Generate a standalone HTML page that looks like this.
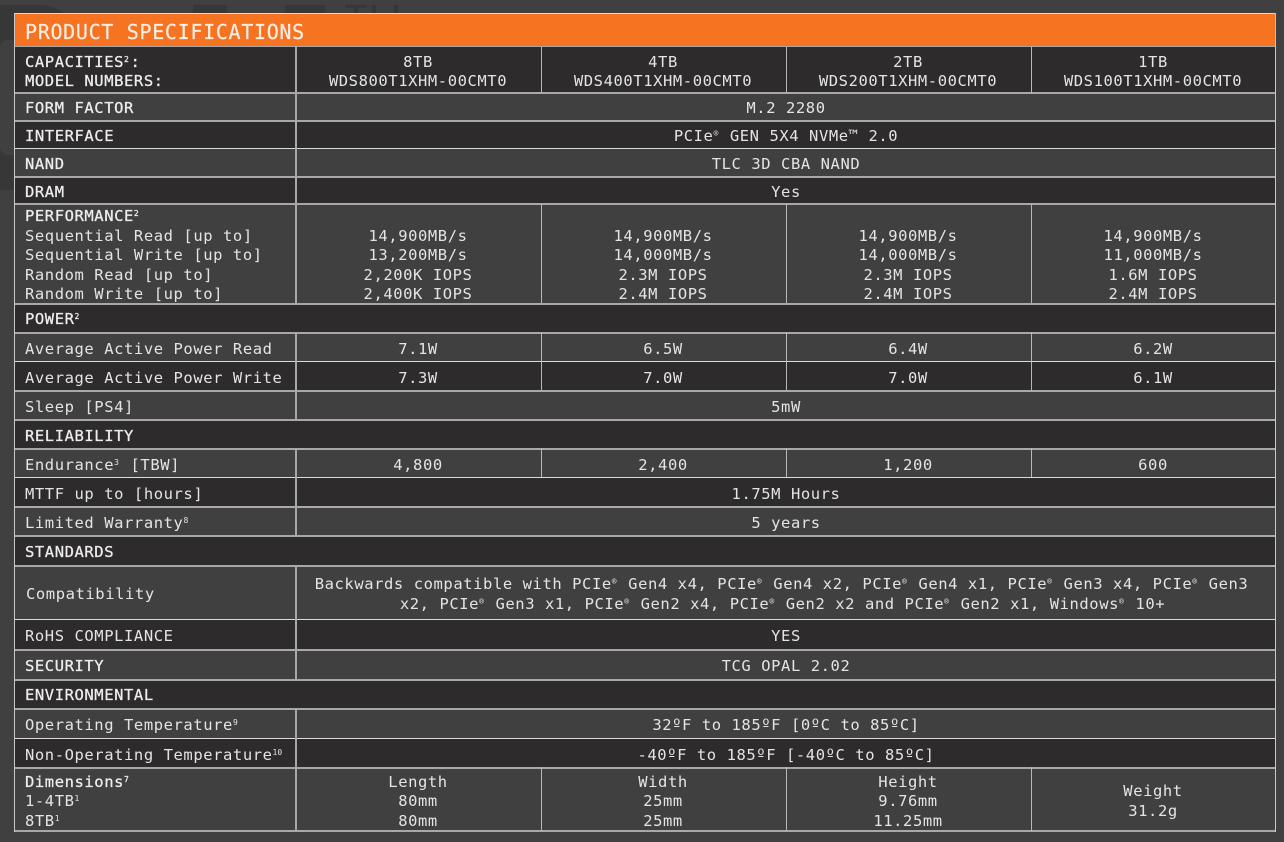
<!DOCTYPE html>
<html><head><meta charset="utf-8"><style>
html,body{margin:0;padding:0;background:#404040}
#p{position:relative;width:1284px;height:842px;overflow:hidden;background:#404040;font-family:"DejaVu Sans Mono","Liberation Mono",monospace;font-size:15.5px;letter-spacing:.57px;color:#e4e4e4}
.g{position:absolute;background:#373737}
.r{position:absolute;left:15px;width:1260px}
.d{background:#2d2b2c}.m{background:#404040}
.h{position:absolute;background:#a8a8a8;left:14px;width:1262px;height:2px}
.hw{background:#dcdcdc}
.v{position:absolute;background:#a8a8a8;width:2px}
.n{width:1px;background:#b8b8b8}
.t{position:absolute;height:20px;line-height:20px;white-space:nowrap;margin-top:1px}
.l{left:25px}
.b{-webkit-text-stroke:.3px #e6e6e6;color:#eee}
.c{transform:translateX(-50%);text-align:center}
.c1{left:418px}.c2{left:663px}.c3{left:908px}.c4{left:1153px}.a{left:786px}
.s{display:inline-block;width:6.5px;font-size:8px;line-height:0;vertical-align:5px;letter-spacing:0;text-align:left}
.s2{width:11px}
</style></head><body><div id="p">
<div class="g" style="left:0;top:5px;width:80px;height:185px;border-radius:0 40px 40px 0"></div>
<div class="g" style="left:0;top:40px;width:14px;height:115px;background:#404040;border-radius:8px 0 0 8px"></div>
<div class="g" style="left:193px;top:5px;width:34px;height:10px"></div>
<div class="g" style="left:285px;top:5px;width:40px;height:10px"></div>
<div class="g" style="left:345px;top:5px;width:22px;height:3px"></div>
<div class="g" style="left:354px;top:5px;width:4px;height:10px"></div>
<div class="g" style="left:372px;top:5px;width:4px;height:10px"></div>
<div class="g" style="left:394px;top:5px;width:4px;height:10px"></div>

<div class="r" style="top:14px;height:32px;background:#f57321"></div>
<div class="r d" style="top:47px;height:46px"></div>
<div class="r m" style="top:93px;height:28px"></div>
<div class="r d" style="top:121px;height:28px"></div>
<div class="r m" style="top:149px;height:28px"></div>
<div class="r d" style="top:177px;height:27px"></div>
<div class="r m" style="top:204px;height:99px"></div>
<div class="r d" style="top:303px;height:29px"></div>
<div class="r m" style="top:332px;height:29px"></div>
<div class="r d" style="top:361px;height:29px"></div>
<div class="r m" style="top:390px;height:29px"></div>
<div class="r d" style="top:419px;height:29px"></div>
<div class="r m" style="top:448px;height:29px"></div>
<div class="r d" style="top:477px;height:29px"></div>
<div class="r m" style="top:506px;height:29px"></div>
<div class="r d" style="top:535px;height:30px"></div>
<div class="r m" style="top:565px;height:54px"></div>
<div class="r d" style="top:619px;height:30px"></div>
<div class="r m" style="top:649px;height:30px"></div>
<div class="r d" style="top:679px;height:29px"></div>
<div class="r m" style="top:708px;height:30px"></div>
<div class="r d" style="top:738px;height:29px"></div>
<div class="r m" style="top:767px;height:64px"></div>

<div class="h hw" style="top:13px;height:1px"></div>
<div class="h" style="top:46px;height:1px"></div>
<div class="h" style="top:92px"></div>
<div class="h" style="top:120px"></div>
<div class="h hw" style="top:148px;height:1px"></div>
<div class="h" style="top:176px"></div>
<div class="h" style="top:203px"></div>
<div class="h" style="top:303px"></div>
<div class="h" style="top:332px"></div>
<div class="h hw" style="top:361px;height:1px"></div>
<div class="h" style="top:390px"></div>
<div class="h" style="top:419px"></div>
<div class="h" style="top:448px"></div>
<div class="h hw" style="top:477px;height:1px"></div>
<div class="h" style="top:506px"></div>
<div class="h" style="top:535px"></div>
<div class="h" style="top:565px"></div>
<div class="h hw" style="top:619px;height:1px"></div>
<div class="h" style="top:649px"></div>
<div class="h" style="top:679px"></div>
<div class="h" style="top:708px"></div>
<div class="h hw" style="top:738px;height:1px"></div>
<div class="h" style="top:767px"></div>
<div class="h" style="top:830px"></div>

<div class="v" style="left:14px;top:13px;height:819px;width:1px;background:#c8c8c8"></div>
<div class="v" style="left:1275px;top:13px;height:819px;width:1px;background:#c8c8c8"></div>
<div class="v" style="left:295px;top:47px;height:256px"></div>
<div class="v" style="left:295px;top:332px;height:88px"></div>
<div class="v" style="left:295px;top:448px;height:87px"></div>
<div class="v" style="left:295px;top:565px;height:114px"></div>
<div class="v" style="left:295px;top:708px;height:123px"></div>
<div class="v n" style="left:541px;top:47px;height:46px"></div>
<div class="v n" style="left:786px;top:47px;height:46px"></div>
<div class="v n" style="left:1031px;top:47px;height:46px"></div>
<div class="v n" style="left:541px;top:204px;height:99px"></div>
<div class="v n" style="left:786px;top:204px;height:99px"></div>
<div class="v n" style="left:1031px;top:204px;height:99px"></div>
<div class="v n" style="left:541px;top:332px;height:58px"></div>
<div class="v n" style="left:786px;top:332px;height:58px"></div>
<div class="v n" style="left:1031px;top:332px;height:58px"></div>
<div class="v n" style="left:541px;top:448px;height:29px"></div>
<div class="v n" style="left:786px;top:448px;height:29px"></div>
<div class="v n" style="left:1031px;top:448px;height:29px"></div>
<div class="v n" style="left:541px;top:767px;height:64px"></div>
<div class="v n" style="left:786px;top:767px;height:64px"></div>
<div class="v n" style="left:1031px;top:767px;height:64px"></div>

<div class="t l" style="top:21px;font-size:20px;letter-spacing:.68px;color:#fdeee4;-webkit-text-stroke:.2px #fdeee4">PRODUCT SPECIFICATIONS</div>

<div class="t l b" style="top:51px">CAPACITIES<span class="s">2</span>:</div>
<div class="t l b" style="top:70px">MODEL NUMBERS:</div>
<div class="t c c1" style="top:51px">8TB</div><div class="t c c1" style="top:70px">WDS800T1XHM-00CMT0</div>
<div class="t c c2" style="top:51px">4TB</div><div class="t c c2" style="top:70px">WDS400T1XHM-00CMT0</div>
<div class="t c c3" style="top:51px">2TB</div><div class="t c c3" style="top:70px">WDS200T1XHM-00CMT0</div>
<div class="t c c4" style="top:51px">1TB</div><div class="t c c4" style="top:70px">WDS100T1XHM-00CMT0</div>

<div class="t l b" style="top:97px">FORM FACTOR</div><div class="t c a" style="top:97px">M.2 2280</div>
<div class="t l b" style="top:125px">INTERFACE</div><div class="t c a" style="top:125px">PCIe<span class="s">®</span> GEN 5X4 NVMe™ 2.0</div>
<div class="t l b" style="top:153px">NAND</div><div class="t c a" style="top:153px">TLC 3D CBA NAND</div>
<div class="t l b" style="top:181px">DRAM</div><div class="t c a" style="top:181px">Yes</div>

<div class="t l b" style="top:205px">PERFORMANCE<span class="s">2</span></div>
<div class="t l" style="top:225px">Sequential Read [up to]</div>
<div class="t l" style="top:244px">Sequential Write [up to]</div>
<div class="t l" style="top:264px">Random Read [up to]</div>
<div class="t l" style="top:283px">Random Write [up to]</div>
<div class="t c c1" style="top:225px">14,900MB/s</div><div class="t c c1" style="top:244px">13,200MB/s</div><div class="t c c1" style="top:264px">2,200K IOPS</div><div class="t c c1" style="top:283px">2,400K IOPS</div>
<div class="t c c2" style="top:225px">14,900MB/s</div><div class="t c c2" style="top:244px">14,000MB/s</div><div class="t c c2" style="top:264px">2.3M IOPS</div><div class="t c c2" style="top:283px">2.4M IOPS</div>
<div class="t c c3" style="top:225px">14,900MB/s</div><div class="t c c3" style="top:244px">14,000MB/s</div><div class="t c c3" style="top:264px">2.3M IOPS</div><div class="t c c3" style="top:283px">2.4M IOPS</div>
<div class="t c c4" style="top:225px">14,900MB/s</div><div class="t c c4" style="top:244px">11,000MB/s</div><div class="t c c4" style="top:264px">1.6M IOPS</div><div class="t c c4" style="top:283px">2.4M IOPS</div>

<div class="t l b" style="top:308px">POWER<span class="s">2</span></div>
<div class="t l" style="top:338px">Average Active Power Read</div>
<div class="t c c1" style="top:338px">7.1W</div><div class="t c c2" style="top:338px">6.5W</div><div class="t c c3" style="top:338px">6.4W</div><div class="t c c4" style="top:338px">6.2W</div>
<div class="t l" style="top:367px">Average Active Power Write</div>
<div class="t c c1" style="top:367px">7.3W</div><div class="t c c2" style="top:367px">7.0W</div><div class="t c c3" style="top:367px">7.0W</div><div class="t c c4" style="top:367px">6.1W</div>
<div class="t l" style="top:396px">Sleep [PS4]</div><div class="t c a" style="top:396px">5mW</div>

<div class="t l b" style="top:425px">RELIABILITY</div>
<div class="t l" style="top:454px">Endurance<span class="s">3</span> [TBW]</div>
<div class="t c c1" style="top:454px">4,800</div><div class="t c c2" style="top:454px">2,400</div><div class="t c c3" style="top:454px">1,200</div><div class="t c c4" style="top:454px">600</div>
<div class="t l" style="top:483px">MTTF up to [hours]</div><div class="t c a" style="top:483px">1.75M Hours</div>
<div class="t l" style="top:512px">Limited Warranty<span class="s">8</span></div><div class="t c a" style="top:512px">5 years</div>

<div class="t l b" style="top:541px">STANDARDS</div>
<div class="t" style="left:26px;top:583px">Compatibility</div>
<div class="t c a" style="top:573px;left:781.5px">Backwards compatible with PCIe<span class="s">®</span> Gen4 x4, PCIe<span class="s">®</span> Gen4 x2, PCIe<span class="s">®</span> Gen4 x1, PCIe<span class="s">®</span> Gen3 x4, PCIe<span class="s">®</span> Gen3</div>
<div class="t c a" style="top:593px;left:782.5px">x2, PCIe<span class="s">®</span> Gen3 x1, PCIe<span class="s">®</span> Gen2 x4, PCIe<span class="s">®</span> Gen2 x2 and PCIe<span class="s">®</span> Gen2 x1, Windows<span class="s">®</span> 10+</div>
<div class="t l" style="top:625px">RoHS COMPLIANCE</div><div class="t c a" style="top:625px">YES</div>
<div class="t l b" style="top:655px">SECURITY</div><div class="t c a" style="top:655px">TCG OPAL 2.02</div>
<div class="t l b" style="top:684px">ENVIRONMENTAL</div>
<div class="t l" style="top:714px">Operating Temperature<span class="s">9</span></div><div class="t c a" style="top:714px">32ºF to 185ºF [0ºC to 85ºC]</div>
<div class="t l" style="top:744px">Non-Operating Temperature<span class="s s2">10</span></div><div class="t c a" style="top:744px">-40ºF to 185ºF [-40ºC to 85ºC]</div>

<div class="t l b" style="top:771px">Dimensions<span class="s">7</span></div>
<div class="t l" style="top:790px">1-4TB<span class="s">1</span></div>
<div class="t l" style="top:810px">8TB<span class="s">1</span></div>
<div class="t c c1" style="top:771px">Length</div><div class="t c c1" style="top:790px">80mm</div><div class="t c c1" style="top:810px">80mm</div>
<div class="t c c2" style="top:771px">Width</div><div class="t c c2" style="top:790px">25mm</div><div class="t c c2" style="top:810px">25mm</div>
<div class="t c c3" style="top:771px">Height</div><div class="t c c3" style="top:790px">9.76mm</div><div class="t c c3" style="top:810px">11.25mm</div>
<div class="t c c4" style="top:780px">Weight</div><div class="t c c4" style="top:800px">31.2g</div>
</div></body></html>
